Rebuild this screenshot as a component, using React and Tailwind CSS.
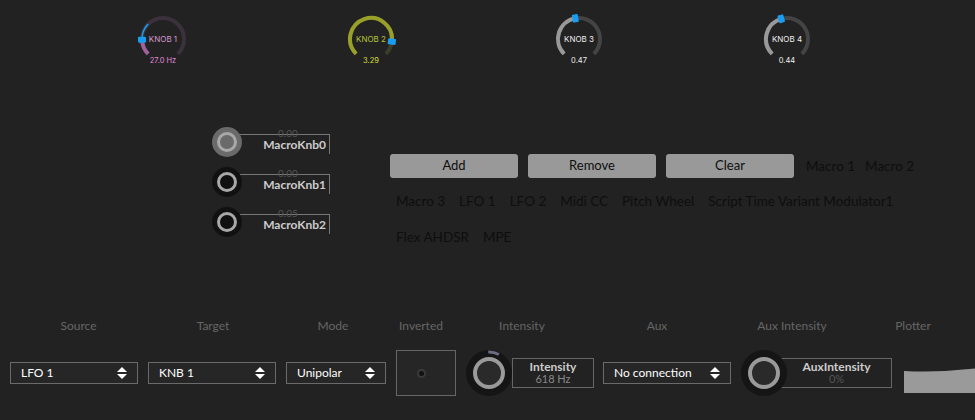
import React from "react";

const F = { fontFamily: "Lato, 'Open Sans', sans-serif" };

function polar(cx, cy, r, deg) {
  const a = ((deg - 90) * Math.PI) / 180;
  return [cx + r * Math.cos(a), cy + r * Math.sin(a)];
}
function arc(cx, cy, r, a0, a1) {
  const [x0, y0] = polar(cx, cy, r, a0);
  const [x1, y1] = polar(cx, cy, r, a1);
  const large = a1 - a0 > 180 ? 1 : 0;
  return `M${x0} ${y0} A${r} ${r} 0 ${large} 1 ${x1} ${y1}`;
}

function TopKnob({ label, value, track, fill, text, valText, handle, extra }) {
  return (
    <div className="relative w-[52px] h-[56px] mx-auto">
      <svg width="52" height="56" viewBox="0 0 52 56" className="absolute inset-0">
        <path d={arc(26, 25, 21, -135, 135)} stroke={track} strokeWidth="4" fill="none" />
        <path d={arc(26, 25, 21, -135, handle)} stroke={fill} strokeWidth="4" fill="none" />
        {extra}
        {(() => {
          const [x, y] = polar(26, 25, 21, handle);
          return <rect x={x - 4} y={y - 3} width="8" height="6" rx="1" fill="#1a9cf0" transform={`rotate(${handle + 90} ${x} ${y})`} />;
        })()}
      </svg>
      <div className="absolute left-0 right-0 top-[19px] text-center text-[8px]" style={{ color: text, fontFamily: "Inter, sans-serif" }}>{label}</div>
      <div className="absolute left-0 right-0 top-[41px] text-center text-[7.5px]" style={{ color: valText, fontFamily: "Inter, sans-serif" }}>{value}</div>
    </div>
  );
}

function Select({ w, label }) {
  return (
    <div className={`${w} shrink-0 h-[22px] border border-[#6a6a6a] bg-[#262626] flex items-center justify-between px-2.5 text-[12px] text-white`} style={F}>
      <span>{label}</span>
      <svg width="10" height="12" viewBox="0 0 10 12"><path d="M5 0L10 5H0Z" fill="#fff" /><path d="M5 12L10 7H0Z" fill="#fff" /></svg>
    </div>
  );
}

function MacroKnob({ name, v, bg }) {
  return (
    <div className="flex items-center h-[40px]">
      <div className={`w-[30px] h-[30px] rounded-full ${bg} flex items-center justify-center shrink-0 z-10`}>
        <div className="w-[20px] h-[20px] rounded-full border-[3px] border-[#a8a8a8]" />
      </div>
      <div className="-ml-[2px] w-[90px] h-[20px] border-t border-r border-[#777] relative mt-[4px]">
        <div className="absolute left-[38px] -top-[9px] text-[10px] text-[#555]" style={F}>{v}</div>
        <div className="absolute right-[3px] top-[1px] text-[12px] font-bold text-[#ccc]" style={F}>{name}</div>
      </div>
    </div>
  );
}

function BigKnob() {
  return (
    <div className="w-[46px] h-[46px] rounded-full bg-[#151515] flex items-center justify-center shrink-0 z-10">
      <div className="w-[32px] h-[32px] rounded-full border-[4px] border-[#9a9a9a] bg-[#2a2a2a]" />
    </div>
  );
}

const DARK = { color: "#0e0e0e" };

export default function App() {
  return (
    <div className="w-[975px] h-[420px] bg-[#222222] overflow-hidden" style={F}>
      <div className="pl-[59px] pt-[14px] grid grid-cols-[208px_208px_208px_208px] h-[80px]">
        <TopKnob label="KNOB 1" value="27.0 Hz" track="#3b313d" fill="#a0609a" text="#d49ad0" valText="#e08ad8" handle={-92}
          extra={<path d={arc(26, 25, 21, -92, -45)} stroke="#1a9cf0" strokeWidth="1.5" fill="none" />} />
        <TopKnob label="KNOB 2" value="3.29" track="#3a3d2a" fill="#98a02a" text="#b9c23a" valText="#d4dd3a" handle={97} />
        <TopKnob label="KNOB 3" value="0.47" track="#444" fill="#999" text="#eee" valText="#eee" handle={-10} />
        <TopKnob label="KNOB 4" value="0.44" track="#444" fill="#999" text="#eee" valText="#eee" handle={-16} />
      </div>
      <div className="flex h-[230px] pt-[42px]">
        <div className="ml-[212px] w-[130px] flex flex-col">
          <MacroKnob name="MacroKnb0" v="0.00" bg="bg-[#6a6a6a]" />
          <MacroKnob name="MacroKnb1" v="0.00" bg="bg-[#111]" />
          <MacroKnob name="MacroKnb2" v="0.05" bg="bg-[#111]" />
        </div>
        <div className="ml-[48px] w-[540px] pt-[32px]">
          <div className="flex items-center gap-[10px] h-[24px]">
            {["Add", "Remove", "Clear"].map((t) => (
              <div key={t} className="w-[128px] h-[24px] rounded-[3px] bg-[#999] text-[13px] flex items-center justify-center" style={DARK}>{t}</div>
            ))}
            <span className="ml-[2px] text-[13.5px]" style={DARK}>Macro 1</span>
            <span className="text-[13.5px]" style={DARK}>Macro 2</span>
          </div>
          <div className="flex gap-[14px] mt-[13px] pl-[6px] text-[13.5px]" style={DARK}>
            {["Macro 3", "LFO 1", "LFO 2", "Midi CC", "Pitch Wheel", "Script Time Variant Modulator1"].map((t) => <span key={t}>{t}</span>)}
          </div>
          <div className="flex gap-[14px] mt-[16px] pl-[6px] text-[13.5px]" style={DARK}>
            <span>Flex AHDSR</span><span>MPE</span>
          </div>
        </div>
      </div>
      <div className="flex text-[12px] text-[#666] h-[30px] pt-[7px]">
        {[["Source", 157], ["Target", 112], ["Mode", 128], ["Inverted", 48], ["Intensity", 154], ["Aux", 116], ["Aux Intensity", 154], ["Plotter", 88]].map(([t, w]) => (
          <div key={t} className="text-center whitespace-nowrap flex justify-center" style={{ width: w }}>{t}</div>
        ))}
      </div>
      <div className="flex items-center pl-[10px] h-[50px] mt-[8px]">
        <Select w="w-[128px]" label="LFO 1" />
        <div className="w-[10px] shrink-0" />
        <Select w="w-[128px]" label="KNB 1" />
        <div className="w-[10px] shrink-0" />
        <Select w="w-[100px]" label="Unipolar" />
        <div className="w-[10px] shrink-0" />
        <div className="w-[60px] h-[46px] shrink-0 border border-[#666] bg-[#262626] flex items-center justify-center">
          <div className="w-[9px] h-[9px] rounded-full bg-[#111] border-2 border-[#3a3a3a] -ml-[10px]" />
        </div>
        <div className="w-[10px] shrink-0" />
        <div className="relative shrink-0">
          <BigKnob />
          <svg className="absolute inset-0 z-20" width="46" height="46"><path d={arc(23, 23, 21, -2, 28)} stroke="#6a6e80" strokeWidth="3" fill="none" /></svg>
        </div>
        <div className="-ml-[0px] w-[82px] shrink-0 h-[30px] border border-[#666] flex flex-col items-center justify-center leading-[12px]">
          <span className="text-[12px] font-bold text-[#ccc]">Intensity</span>
          <span className="text-[11px] text-[#888]">618 Hz</span>
        </div>
        <div className="w-[9px] shrink-0" />
        <Select w="w-[128px]" label="No connection" />
        <div className="w-[10px] shrink-0" />
        <BigKnob />
        <div className="-ml-[6px] w-[111px] shrink-0 h-[30px] border border-[#666] flex flex-col items-center justify-center leading-[12px]">
          <span className="text-[12px] font-bold text-[#ccc]">AuxIntensity</span>
          <span className="text-[11px] text-[#555]">0%</span>
        </div>
        <div className="w-[12px] shrink-0" />
        <svg width="84" height="28" viewBox="0 0 84 28" className="mt-[16px] shrink-0">
          <path d="M0 4 Q40 6 84 0 V26 H0Z" fill="#9a9a9a" />
        </svg>
      </div>
    </div>
  );
}
